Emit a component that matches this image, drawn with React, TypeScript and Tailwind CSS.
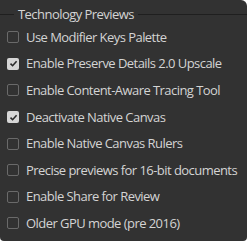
const options = [
    { label: "Use Modifier Keys Palette", checked: false },
    { label: "Enable Preserve Details 2.0 Upscale", checked: true },
    { label: "Enable Content-Aware Tracing Tool", checked: false },
    { label: "Deactivate Native Canvas", checked: true },
    { label: "Enable Native Canvas Rulers", checked: false },
    { label: "Precise previews for 16-bit documents", checked: false },
    { label: "Enable Share for Review", checked: false },
    { label: "Older GPU mode (pre 2016)", checked: false },
]

function Checkbox({ checked }: { checked: boolean }) {
    if (checked) {
        return (
            <span className="flex w-[12px] h-[12px] shrink-0 items-center justify-center rounded-[2px] bg-[#d6d6d6]">
                <svg width="9" height="9" viewBox="0 0 9 9">
                    <path d="M1.5 4.6 L3.6 6.7 L7.6 2.2" fill="none" stroke="#2a2a2a" strokeWidth="1.6" />
                </svg>
            </span>
        )
    }
    return <span className="block w-[12px] h-[12px] shrink-0 rounded-[2px] border border-[#6a6a6a]" />
}

export default function App() {
    return (
        <div className="w-[247px] h-[241px] bg-white">
            <div
                className="w-full h-full bg-[#323232] rounded-tr-[6px] rounded-b-[4px] text-[#d4d4d4] text-[13px] tracking-[-0.55px]"
                style={{ fontFamily: '"Open Sans", "Noto Sans", sans-serif' }}
            >
                <div className="flex items-center h-[24px] pt-[4px]">
                    <div className="w-[14px] h-px bg-[#1f1f1f]" />
                    <span className="px-[4px] leading-none">Technology Previews</span>
                    <div className="flex-1 h-px bg-[#1f1f1f]" />
                </div>
                <div className="flex flex-col">
                    {options.map((o) => (
                        <div key={o.label} className="flex items-center h-[26.6px] pl-[7px] gap-[7px]">
                            <Checkbox checked={o.checked} />
                            <span className="leading-none whitespace-nowrap">{o.label}</span>
                        </div>
                    ))}
                </div>
            </div>
        </div>
    )
}
